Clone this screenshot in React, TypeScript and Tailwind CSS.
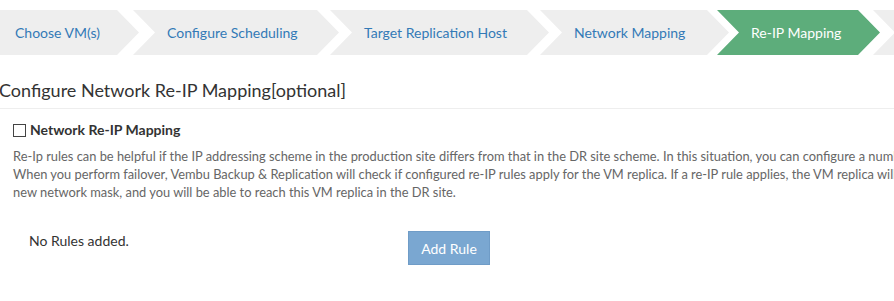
const steps = [
  { label: 'Choose VM(s)', width: 'w-[139px]', ml: 'ml-0', first: true },
  { label: 'Configure Scheduling', width: 'w-[206px]', ml: '-ml-[6px]' },
  { label: 'Target Replication Host', width: 'w-[219px]', ml: '-ml-[9px]' },
  { label: 'Network Mapping', width: 'w-[189px]', ml: '-ml-[9px]' },
  { label: 'Re-IP Mapping', width: 'w-[163px]', ml: '-ml-[12px]', active: true },
  { label: '', width: 'w-[60px]', ml: '-ml-[7px]' },
];

const App = () => {
  return (
    <div className="w-full h-[301px] overflow-hidden bg-white font-['Lato','Liberation_Sans',sans-serif] text-[#333]">
      <div className="pt-[10px] flex h-[55px] w-[1000px]">
        {steps.map((step) => (
          <div
            key={step.label || 'more'}
            className={[
              'h-[45px] shrink-0 flex items-center text-[14px] whitespace-nowrap',
              step.width,
              step.ml,
              step.first
                ? 'pl-[15px] [clip-path:polygon(0_0,calc(100%-22px)_0,100%_50%,calc(100%-22px)_100%,0_100%)]'
                : 'pl-[34px] [clip-path:polygon(0_0,calc(100%-22px)_0,100%_50%,calc(100%-22px)_100%,0_100%,22px_50%)]',
              step.active ? 'bg-[#5dad7b] text-white' : 'bg-[#eeeeee] text-[#337ab7]',
            ].join(' ')}
          >
            {step.label}
          </div>
        ))}
      </div>

      <h2 className="mt-[23px] -ml-[1px] pb-[6px] text-[18px] leading-[24px] font-normal text-[#333] border-b border-[#eeeeee]">
        Configure Network Re-IP Mapping[optional]
      </h2>

      <label className="mt-[11px] ml-[13px] flex items-center gap-[4px] text-[14px] leading-[20px] font-bold text-[#333]">
        <span className="w-[13px] h-[13px] border border-[#444] bg-white" />
        Network Re-IP Mapping
      </label>

      <div className="mt-[7px] ml-[13px] w-[1000px] text-[12.85px] leading-[18px] text-[#666] whitespace-nowrap">
        <p>
          Re-Ip rules can be helpful if the IP addressing scheme in the production site differs from that in the DR site
          scheme. In this situation, you can configure a number of re-IP rules.
        </p>
        <p>
          When you perform failover, Vembu Backup &amp; Replication will check if configured re-IP rules apply for the VM
          replica. If a re-IP rule applies, the VM replica will get a new IP address and a
        </p>
        <p>new network mask, and you will be able to reach this VM replica in the DR site.</p>
      </div>

      <div className="mt-[30px] flex items-start">
        <p className="w-[408px] pl-[29px] text-[14px] leading-[20px] text-[#333]">No Rules added.</p>
        <button
          type="button"
          className="w-[82px] h-[34px] bg-[#7aa7d1] border border-[#6f9cc7] text-white text-[14px]"
        >
          Add Rule
        </button>
      </div>
    </div>
  );
};

export default App;
